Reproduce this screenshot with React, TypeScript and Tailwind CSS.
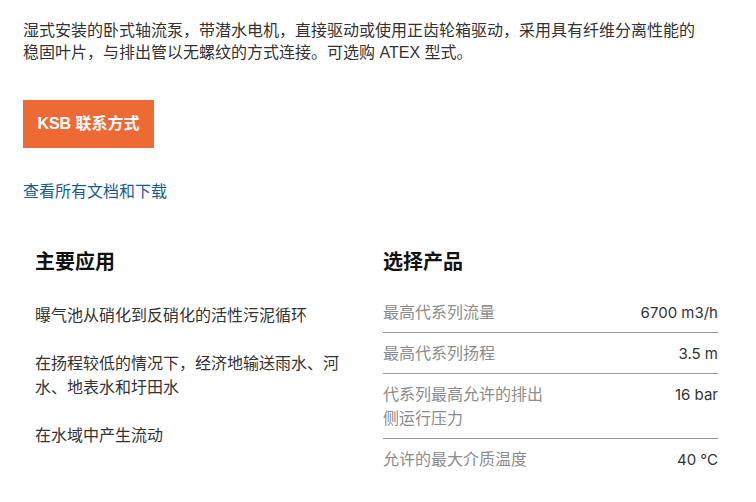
const applications = [
  '曝气池从硝化到反硝化的活性污泥循环',
  '在扬程较低的情况下，经济地输送雨水、河水、地表水和圩田水',
  '在水域中产生流动',
]

const specs = [
  { label: '最高代系列流量', value: '6700 m3/h' },
  { label: '最高代系列扬程', value: '3.5 m' },
  { label: '代系列最高允许的排出侧运行压力', value: '16 bar' },
  { label: '允许的最大介质温度', value: '40 °C' },
]

export default function App() {
  return (
    <div className="min-h-[502px] w-[756px] bg-white font-['Liberation_Sans','Noto_Sans_CJK_SC',sans-serif] text-[#333]">
      <div className="px-[23px] pt-[20px]">
        <p className="w-[684px] text-[16px] leading-[22px]">
          湿式安装的卧式轴流泵，带潜水电机，直接驱动或使用正齿轮箱驱动，采用具有纤维分离性能的稳固叶片，与排出管以无螺纹的方式连接。可选购 ATEX 型式。
        </p>

        <button className="mt-[36px] flex h-[48px] w-[131px] items-center justify-center bg-[#ee6a35] text-[16px] font-semibold text-white">
          KSB 联系方式
        </button>

        <a href="#" className="mt-[32px] block w-fit text-[16px] leading-[24px] text-[#1d5a8e]">
          查看所有文档和下载
        </a>
      </div>

      <div className="mt-[44px] flex">
        <section className="w-[383px] pl-[35px]">
          <h3 className="text-[20px] font-bold leading-[28px] text-[#111]">主要应用</h3>
          <ul className="mt-[28px] w-[312px] space-y-[24px]">
            {applications.map((item) => (
              <li key={item} className="text-[16px] leading-[24px]">
                {item}
              </li>
            ))}
          </ul>
        </section>

        <section className="w-[335px]">
          <h3 className="text-[20px] font-bold leading-[28px] text-[#111]">选择产品</h3>
          <dl className="mt-[25px]">
            {specs.map((spec, i) => (
              <div
                key={spec.label}
                className={`flex items-start justify-between pb-[7px] ${i > 0 ? 'pt-[9px]' : ''} ${
                  i < specs.length - 1 ? 'border-b border-[#999]' : ''
                }`}
              >
                <dt className="w-[168px] text-[16px] leading-[24px] text-[#8c8c8c]">{spec.label}</dt>
                <dd className="font-['Inter',sans-serif] text-[15px] leading-[24px] text-[#333]">
                  {spec.value}
                </dd>
              </div>
            ))}
          </dl>
        </section>
      </div>
    </div>
  )
}
